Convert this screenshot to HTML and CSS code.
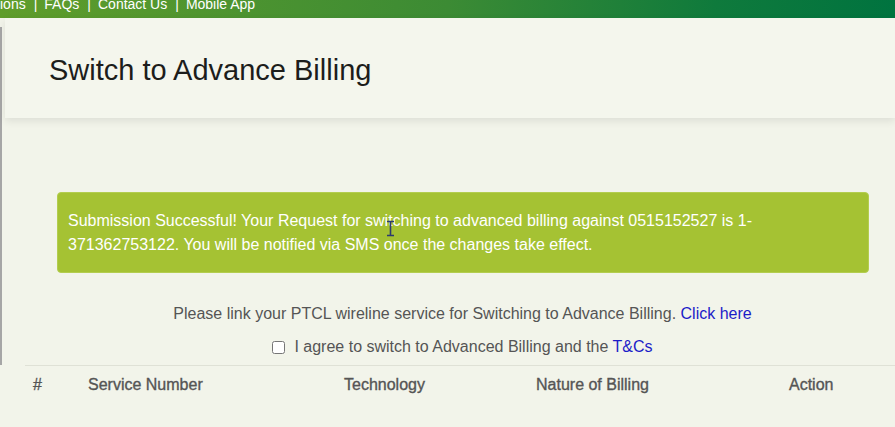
FILE: index.html
```html
<!DOCTYPE html>
<html>
<head>
<meta charset="utf-8">
<link rel="stylesheet" href="styles.css">
</head>
<body>
<div class="topbar">
  <nav class="topnav"><span>ions</span><span class="sep">|</span><span>FAQs</span><span class="sep">|</span><span>Contact Us</span><span class="sep">|</span><span>Mobile App</span></nav>
</div>
<div class="shell">
  <div class="edge"></div>
  <main class="main">
    <header class="page-head">
      <h1 class="title">Switch to Advance Billing</h1>
    </header>
    <section class="content">
      <div class="alert">
        Submission Successful! Your Request for switching to advanced billing against 0515152527 is 1-371362753122. You will be notified via SMS once the changes take effect.
        <svg class="cursor" width="9" height="17" viewBox="0 0 9 17"><path d="M1 1.5h7M1 15.5h7M4.5 1.5v14" stroke="#2c3a6e" stroke-width="1.6" fill="none"/></svg>
      </div>
      <p class="notice">Please link your PTCL wireline service for Switching to Advance Billing. <a class="link" href="#">Click here</a></p>
      <label class="agree"><input type="checkbox" class="check"><span>I agree to switch to Advanced Billing and the <a class="link" href="#">T&amp;Cs</a></span></label>
      <div class="table-head">
        <div class="th">#</div>
        <div class="th">Service Number</div>
        <div class="th">Technology</div>
        <div class="th">Nature of Billing</div>
        <div class="th">Action</div>
      </div>
    </section>
  </main>
</div>
</body>
</html>
```
FILE: styles.css
```css
html, body {
  margin: 0;
  padding: 0;
}
body {
  background: #f2f4ea;
  font-family: "Liberation Sans", Arial, sans-serif;
  overflow: hidden;
  width: 895px;
  height: 427px;
}
.topbar {
  height: 18px;
  overflow: hidden;
  background: linear-gradient(90deg, #5f9d2b 0%, #3c8b34 50%, #0f7a3c 80%, #00733f 100%);
}
.topnav {
  display: flex;
  margin-top: -4px;
  font-size: 14px;
  line-height: 16px;
  color: #ffffff;
  white-space: nowrap;
}
.sep {
  margin: 0 7px 0 8px;
}
.shell {
  display: flex;
  align-items: flex-start;
}
.edge {
  flex: 0 0 2px;
  width: 2px;
  height: 338px;
  margin-top: 9px;
  background: #a6a6a6;
}
.main {
  flex: 1;
  min-width: 0;
}
.page-head {
  margin-left: 3px;
  height: 100px;
  box-sizing: border-box;
  padding: 35px 0 0 44px;
  background: #f4f6ed;
  box-shadow: 0 3px 8px rgba(0, 0, 0, 0.09);
}
.title {
  margin: 0;
  font-size: 29px;
  line-height: 35px;
  font-weight: normal;
  color: #1c1d1b;
}
.content {
  margin-left: 23px;
  width: 875px;
  padding-top: 74px;
}
.alert {
  position: relative;
  margin: 0 31px 0 32px;
  padding: 16px 10px 15px 10px;
  background: #a5c233;
  border: 1px solid #b3cd4f;
  border-radius: 4px;
  color: #ffffff;
  font-size: 16px;
  line-height: 24px;
}
.cursor {
  position: absolute;
  left: 328px;
  top: 27px;
}
.notice {
  margin: 31px 0 0 0;
  text-align: center;
  font-size: 16px;
  line-height: 20px;
  color: #555555;
}
.link {
  color: #1c1cc8;
  text-decoration: none;
}
.agree {
  display: flex;
  justify-content: center;
  align-items: center;
  gap: 9px;
  margin-top: 13px;
  font-size: 16px;
  line-height: 20px;
  color: #555555;
}
.check {
  margin: 0;
  width: 13px;
  height: 13px;
}
.table-head {
  display: grid;
  grid-template-columns: 55px 256px 192px 253px 1fr;
  margin-top: 8px;
  border-top: 1px solid #dfe1d6;
}
.th {
  padding: 9px 8px 0 8px;
  font-size: 16px;
  line-height: 19px;
  color: #555555;
  -webkit-text-stroke: 0.35px #555555;
}
```
